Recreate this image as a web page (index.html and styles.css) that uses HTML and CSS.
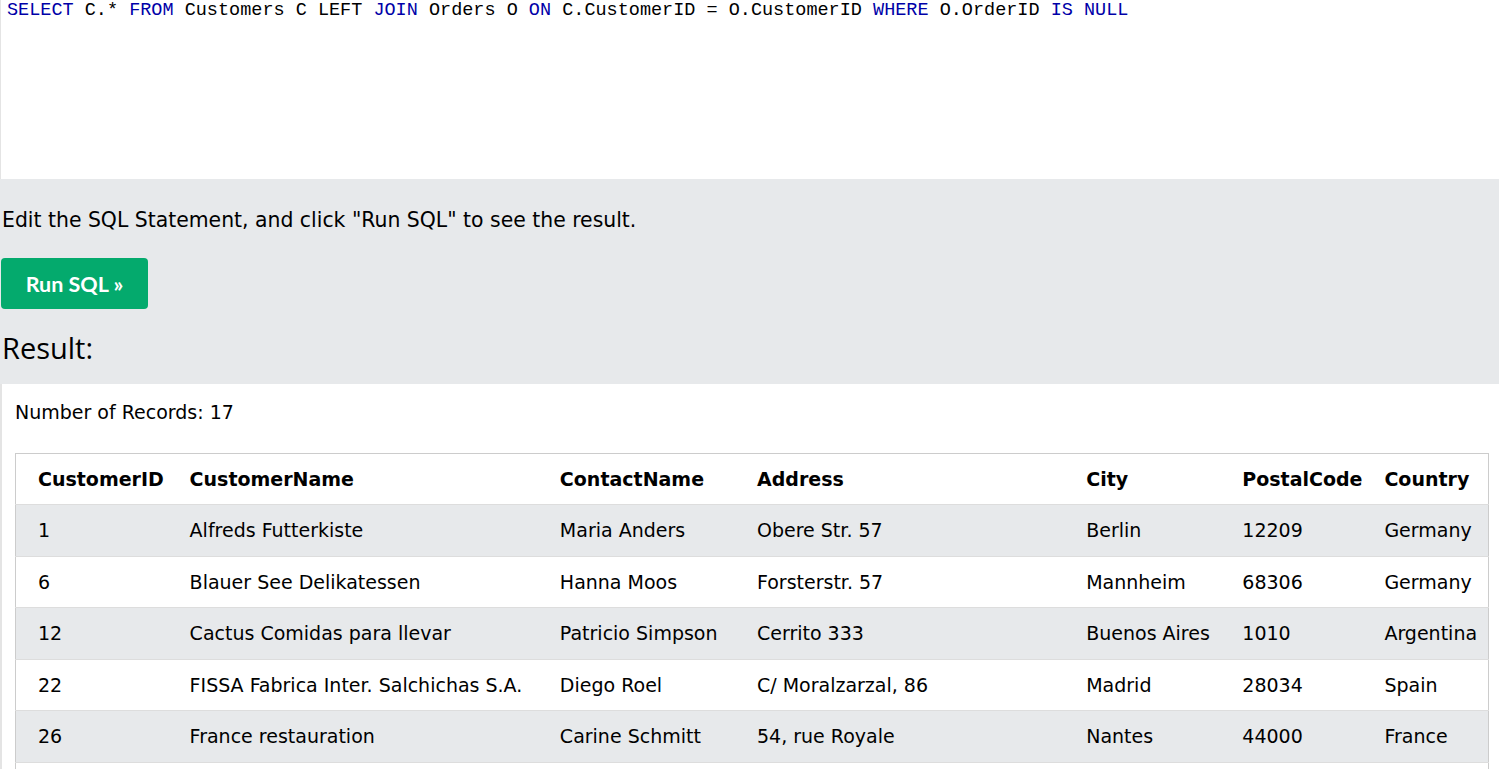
FILE: index.html
```html
<!DOCTYPE html>
<html>
<head>
<meta charset="utf-8">
<link rel="stylesheet" href="styles.css">
</head>
<body>
<div class="editor">
  <div class="code"><span class="kw">SELECT</span> C.* <span class="kw">FROM</span> Customers C LEFT <span class="kw">JOIN</span> Orders O <span class="kw">ON</span> C.CustomerID = O.CustomerID <span class="kw">WHERE</span> O.OrderID <span class="kw">IS</span> <span class="kw">NULL</span></div>
</div>
<div class="controls">
  <p class="hint">Edit the SQL Statement, and click "Run SQL" to see the result.</p>
  <button class="run">Run SQL »</button>
  <h2 class="result-title">Result:</h2>
</div>
<div class="result">
  <div class="count">Number of Records: 17</div>
  <table class="grid">
    <colgroup>
      <col class="c1"><col class="c2"><col class="c3"><col class="c4"><col class="c5"><col class="c6"><col class="c7">
    </colgroup>
    <tr><th>CustomerID</th><th>CustomerName</th><th>ContactName</th><th>Address</th><th>City</th><th>PostalCode</th><th>Country</th></tr>
    <tr><td>1</td><td>Alfreds Futterkiste</td><td>Maria Anders</td><td>Obere Str. 57</td><td>Berlin</td><td>12209</td><td>Germany</td></tr>
    <tr><td>6</td><td>Blauer See Delikatessen</td><td>Hanna Moos</td><td>Forsterstr. 57</td><td>Mannheim</td><td>68306</td><td>Germany</td></tr>
    <tr><td>12</td><td>Cactus Comidas para llevar</td><td>Patricio Simpson</td><td>Cerrito 333</td><td>Buenos Aires</td><td>1010</td><td>Argentina</td></tr>
    <tr><td>22</td><td>FISSA Fabrica Inter. Salchichas S.A.</td><td>Diego Roel</td><td>C/ Moralzarzal, 86</td><td>Madrid</td><td>28034</td><td>Spain</td></tr>
    <tr><td>26</td><td>France restauration</td><td>Carine Schmitt</td><td>54, rue Royale</td><td>Nantes</td><td>44000</td><td>France</td></tr>
    <tr class="empty"><td></td><td></td><td></td><td></td><td></td><td></td><td></td></tr>
  </table>
</div>
</body>
</html>
```
FILE: styles.css
```css
html, body {
  margin: 0;
  padding: 0;
  overflow: hidden;
  background: #fff;
}
body {
  font-family: "DejaVu Sans", Verdana, sans-serif;
  color: #000;
}
.editor {
  height: 179px;
  background: #fff;
  border-left: 1px solid #e4e4e4;
  box-sizing: border-box;
}
.code {
  font-family: "Liberation Mono", monospace;
  font-size: 18.5px;
  line-height: 22px;
  padding: 0 0 0 6px;
  white-space: pre;
  color: #000;
}
.kw {
  color: #0000a8;
}
.controls {
  background: #e7e9eb;
  height: 205px;
  padding: 1px 0 0 2px;
  box-sizing: border-box;
}
.hint {
  font-family: "DejaVu Sans", Verdana, sans-serif;
  font-size: 20.4px;
  margin: 27px 0 0 0;
  line-height: 26px;
}
.run {
  display: block;
  margin: 25px 0 0 -1px;
  width: 147px;
  height: 51px;
  border: none;
  border-radius: 4px;
  background: #04aa6d;
  color: #fff;
  font-family: Lato, sans-serif;
  font-weight: bold;
  font-size: 21.5px;
  padding: 0;
}
.result-title {
  font-family: "Open Sans", sans-serif;
  font-weight: normal;
  font-size: 29px;
  margin: 19px 0 0 0;
  line-height: 40px;
}
.result {
  border-left: 2px solid #e4e4e4;
  padding: 15px 0 0 13px;
}
.count {
  font-size: 19px;
  line-height: 26px;
}
.grid {
  margin-top: 28px;
  border-collapse: collapse;
  border: 1px solid #cccccc;
  table-layout: fixed;
  width: 1474px;
  font-size: 19px;
}
.c1 { width: 166px; }
.c2 { width: 370px; }
.c3 { width: 197px; }
.c4 { width: 329px; }
.c5 { width: 156px; }
.c6 { width: 142px; }
.c7 { width: 112px; }
.grid th, .grid td {
  text-align: left;
  padding: 0 8px;
  height: 50.5px;
  white-space: nowrap;
  overflow: hidden;
}
.grid th {
  height: 50px;
}
.grid tr {
  border-bottom: 1px solid #dddddd;
}
.grid th:first-child, .grid td:first-child {
  padding-left: 22px;
}
.grid tr:nth-child(even) {
  background: #e7e9eb;
}
```
